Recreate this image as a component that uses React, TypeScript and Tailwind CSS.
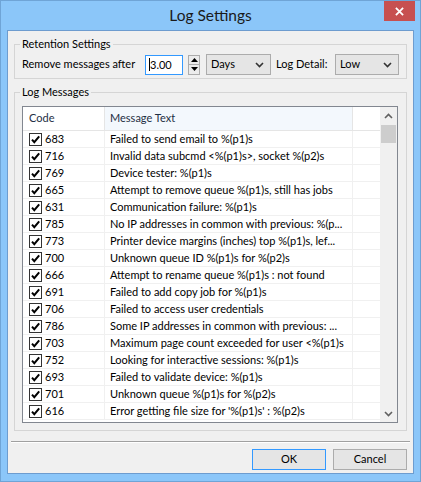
import React from "react";

const messages: [string, string][] = [
  ["683", "Failed to send email to %(p1)s"],
  ["716", "Invalid data subcmd <%(p1)s>, socket %(p2)s"],
  ["769", "Device tester: %(p1)s"],
  ["665", "Attempt to remove queue %(p1)s, still has jobs"],
  ["631", "Communication failure: %(p1)s"],
  ["785", "No IP addresses in common with previous: %(p..."],
  ["773", "Printer device margins (inches) top %(p1)s, lef..."],
  ["700", "Unknown queue ID %(p1)s for %(p2)s"],
  ["666", "Attempt to rename queue %(p1)s : not found"],
  ["691", "Failed to add copy job for %(p1)s"],
  ["706", "Failed to access user credentials"],
  ["786", "Some IP addresses in common with previous: ..."],
  ["703", "Maximum page count exceeded for user <%(p1)s"],
  ["752", "Looking for interactive sessions: %(p1)s"],
  ["693", "Failed to validate device: %(p1)s"],
  ["701", "Unknown queue %(p1)s for %(p2)s"],
  ["616", "Error getting file size for '%(p1)s' : %(p2)s"],
];

function CheckBox() {
  return (
    <span className="flex h-[13px] w-[13px] shrink-0 items-center justify-center border border-[#333333] bg-white">
      <svg viewBox="0 0 11 11" className="h-[11px] w-[11px]">
        <path d="M2 5.6 L4.3 8.2 L9.2 2.4" fill="none" stroke="#000" strokeWidth="2" />
      </svg>
    </span>
  );
}

function Chevron({ up = false, color = "#333" }: { up?: boolean; color?: string }) {
  return (
    <svg viewBox="0 0 9 6" className="h-[6px] w-[9px]">
      <path
        d={up ? "M1 5 L4.5 1.5 L8 5" : "M1 1 L4.5 4.5 L8 1"}
        fill="none"
        stroke={color}
        strokeWidth="1.6"
      />
    </svg>
  );
}

function Combo({ label, width }: { label: string; width: string }) {
  return (
    <div
      className={`flex h-[21px] ${width} shrink-0 items-center justify-between border border-[#acacac] bg-[#e5e5e5] pl-[4px] pr-[6px]`}
    >
      <span>{label}</span>
      <Chevron />
    </div>
  );
}

function SpinBox() {
  return (
    <div className="ml-[5px] flex h-[20px] w-[12px] shrink-0 flex-col">
      <div className="flex h-[10px] items-center justify-center border border-[#acacac] bg-[#ececec]">
        <svg viewBox="0 0 7 4" className="h-[4px] w-[7px]">
          <path d="M0 4 L3.5 0 L7 4 Z" fill="#000" />
        </svg>
      </div>
      <div className="flex h-[10px] items-center justify-center border border-t-0 border-[#acacac] bg-[#ececec]">
        <svg viewBox="0 0 7 4" className="h-[4px] w-[7px]">
          <path d="M0 0 L3.5 4 L7 0 Z" fill="#000" />
        </svg>
      </div>
    </div>
  );
}

export default function App() {
  return (
    <div className="flex h-[482px] w-[421px] flex-col border border-[#6fa4d6] bg-[#8bc6f9] font-['Lato','Liberation_Sans',sans-serif] text-[11px] text-black">
      <div className="relative flex h-[29px] shrink-0 items-center justify-center">
        <span className="text-[15.5px] text-[#1a1a1a]">Log Settings</span>
        <div className="absolute right-[5px] top-0 flex h-[20px] w-[31px] items-center justify-center bg-[#c75050]">
          <svg viewBox="0 0 10 10" className="h-[9px] w-[9px]">
            <path d="M1 1 L9 9 M9 1 L1 9" stroke="#fff" strokeWidth="2" />
          </svg>
        </div>
      </div>

      <div className="mx-[6px] mb-[7px] flex flex-1 flex-col border border-[#6d9ccf] bg-[#f0f0f0]">
        <fieldset className="mx-[6px] mt-[5px] border border-[#d5d5d5] pb-[3px] pl-[7px]">
          <legend className="-ml-[2px] px-[2px] leading-[16px]">Retention Settings</legend>
          <div className="mt-[2px] flex items-center">
            <span className="w-[123px] shrink-0">Remove messages after</span>
            <div className="flex h-[20px] w-[38px] shrink-0 items-center border border-[#3399ff] bg-white pl-[3px]">
              <span className="border-l border-black pl-0 leading-[13px]">3.00</span>
            </div>
            <SpinBox />
            <div className="ml-[6px]">
              <Combo label="Days" width="w-[65px]" />
            </div>
            <span className="ml-[5px] w-[59px] shrink-0">Log Detail:</span>
            <Combo label="Low" width="w-[64px]" />
          </div>
        </fieldset>

        <fieldset className="mx-[6px] mt-[5px] border border-[#d5d5d5] pb-[7px] pl-[7px] pr-[8px]">
          <legend className="-ml-[2px] px-[2px] leading-[16px]">Log Messages</legend>
          <div className="mt-[6px] flex h-[317px] border border-[#828790] bg-white">
            <div className="flex min-w-0 flex-1 flex-col overflow-hidden">
              <div className="flex h-[24px] shrink-0 border-b border-[#e5e5e5] text-[#1e2f44]">
                <div className="flex w-[82px] shrink-0 items-center border-r border-[#e5e5e5] pl-[6px]">
                  Code
                </div>
                <div className="flex w-[248px] shrink-0 items-center border-r border-[#e5e5e5] bg-[#f3f8fd] pl-[5px]">
                  Message Text
                </div>
                <div className="flex-1" />
              </div>
              {messages.map(([code, text]) => (
                <div key={code} className="flex h-[17px] shrink-0 border-b border-[#f0f0f0]">
                  <div className="flex w-[82px] shrink-0 items-center gap-[3px] border-r border-[#f0f0f0] pl-[6px]">
                    <CheckBox />
                    <span>{code}</span>
                  </div>
                  <div className="flex w-[248px] shrink-0 items-center overflow-hidden whitespace-nowrap border-r border-[#f0f0f0] pl-[5px]">
                    {text}
                  </div>
                  <div className="flex-1" />
                </div>
              ))}
            </div>
            <div className="flex w-[17px] shrink-0 flex-col bg-[#f0f0f0]">
              <div className="flex h-[17px] items-center justify-center">
                <Chevron up color="#606060" />
              </div>
              <div className="mx-[1px] mt-[1px] h-[18px] bg-[#cdcdcd]" />
              <div className="flex-1" />
              <div className="flex h-[17px] items-center justify-center">
                <Chevron color="#606060" />
              </div>
            </div>
          </div>
        </fieldset>

        <div className="mx-[3px] mt-[10px] border-t border-b border-t-[#a0a0a0] border-b-white" />

        <div className="mr-[6px] mt-[6px] flex justify-end gap-[7px]">
          <div className="flex h-[21px] w-[74px] items-center justify-center border border-[#3399ff] bg-[#e5e5e5]">
            OK
          </div>
          <div className="flex h-[21px] w-[74px] items-center justify-center border border-[#acacac] bg-[#e5e5e5]">
            Cancel
          </div>
        </div>
      </div>
    </div>
  );
}
